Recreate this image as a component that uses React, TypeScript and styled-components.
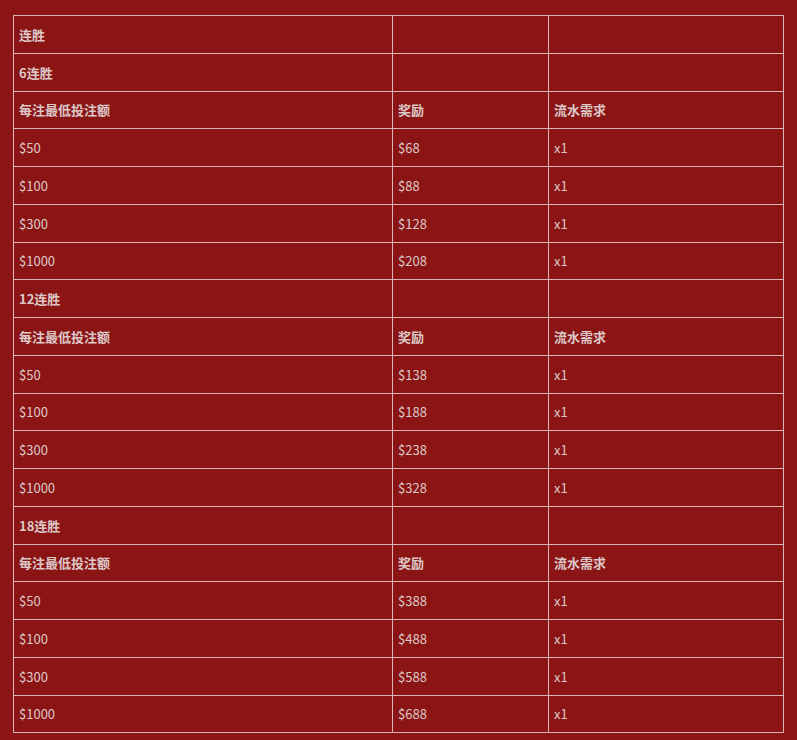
import styled, { createGlobalStyle } from 'styled-components';

const GlobalStyle = createGlobalStyle`
  html, body {
    margin: 0;
    padding: 0;
    background: #8b1515;
  }
  body {
    font-family: "Noto Sans CJK SC", "Noto Sans", sans-serif;
    color: #dcc8c8;
    font-size: 13px;
  }
`;

interface Tier {
  title: string;
  rows: [string, string][];
}

const tiers: Tier[] = [
  {
    title: '6连胜',
    rows: [
      ['$50', '$68'],
      ['$100', '$88'],
      ['$300', '$128'],
      ['$1000', '$208'],
    ],
  },
  {
    title: '12连胜',
    rows: [
      ['$50', '$138'],
      ['$100', '$188'],
      ['$300', '$238'],
      ['$1000', '$328'],
    ],
  },
  {
    title: '18连胜',
    rows: [
      ['$50', '$388'],
      ['$100', '$488'],
      ['$300', '$588'],
      ['$1000', '$688'],
    ],
  },
];

export default function App() {
  return (
    <>
      <GlobalStyle />
      <Wrapper>
        <Table>
          <colgroup>
            <col style={{ width: 379 }} />
            <col style={{ width: 156 }} />
            <col />
          </colgroup>
          <tbody>
            <Row>
              <Cell $bold>连胜</Cell>
              <Cell />
              <Cell />
            </Row>
            {tiers.map((tier) => (
              <TierRows key={tier.title} tier={tier} />
            ))}
          </tbody>
        </Table>
        <Note>注：活动最终解释权归本公司所有</Note>
      </Wrapper>
    </>
  );
}

const TierRows = ({ tier }: { tier: Tier }) => (
  <>
    <Row>
      <Cell $bold>{tier.title}</Cell>
      <Cell />
      <Cell />
    </Row>
    <Row>
      <Cell $bold>每注最低投注额</Cell>
      <Cell $bold>奖励</Cell>
      <Cell $bold>流水需求</Cell>
    </Row>
    {tier.rows.map(([bet, reward]) => (
      <Row key={bet}>
        <Cell>{bet}</Cell>
        <Cell>{reward}</Cell>
        <Cell>x1</Cell>
      </Row>
    ))}
  </>
);

const Wrapper = styled.div`
  padding-top: 15px;
`;

const Table = styled.table`
  margin-left: 13px;
  width: 771px;
  border-collapse: collapse;
  table-layout: fixed;
`;

const Row = styled.tr`
  height: 37.75px;
`;

const Cell = styled.td<{ $bold?: boolean }>`
  border: 1px solid #dcb4b4;
  padding: 0 5px;
  font-weight: ${(p) => (p.$bold ? 700 : 400)};
  color: #dcc8c8;
  vertical-align: middle;
`;

const Note = styled.p`
  margin: 4px 0 0;
  font-size: 13px;
  color: #dcc8c8;
`;
